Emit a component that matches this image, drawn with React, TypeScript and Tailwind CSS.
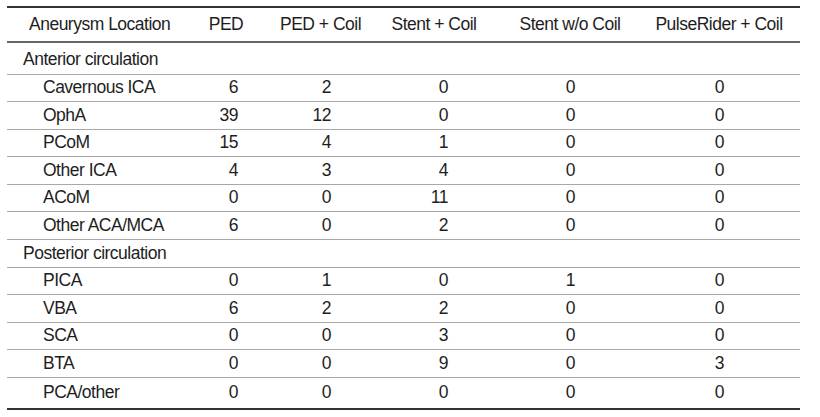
import React from "react";

type Row = { label: string; values?: number[]; group?: boolean };

const rows: Row[] = [
    { label: "Anterior circulation", group: true },
    { label: "Cavernous ICA", values: [6, 2, 0, 0, 0] },
    { label: "OphA", values: [39, 12, 0, 0, 0] },
    { label: "PCoM", values: [15, 4, 1, 0, 0] },
    { label: "Other ICA", values: [4, 3, 4, 0, 0] },
    { label: "ACoM", values: [0, 0, 11, 0, 0] },
    { label: "Other ACA/MCA", values: [6, 0, 2, 0, 0] },
    { label: "Posterior circulation", group: true },
    { label: "PICA", values: [0, 1, 0, 1, 0] },
    { label: "VBA", values: [6, 2, 2, 0, 0] },
    { label: "SCA", values: [0, 0, 3, 0, 0] },
    { label: "BTA", values: [0, 0, 9, 0, 3] },
    { label: "PCA/other", values: [0, 0, 0, 0, 0] },
];

// right padding of the number cells, per column
const numPad = ["pr-[42px]", "pr-[43px]", "pr-[64px]", "pr-[53px]", "pr-[76px]"];

const App: React.FC = () => {
    return (
        <div
            className="w-[820px] h-[417px] bg-white text-[#1e1e1e] pt-[6px] px-[7px] text-[17.5px] tracking-[-0.5px] leading-none whitespace-nowrap"
            style={{ fontFamily: '"Liberation Sans", Arial, sans-serif' }}
        >
            <div className="w-[793px] border-t-2 border-[#333]">
                {/* header */}
                <div className="grid grid-cols-[179px_94px_94px_138px_116px_172px] h-[35px] items-center border-b-2 border-[#666]">
                    <div className="pl-[22px]">Aneurysm Location</div>
                    <div className="text-center pr-[14px]">PED</div>
                    <div className="text-center pr-[20px]">PED + Coil</div>
                    <div className="text-center pr-[18px]">Stent + Coil</div>
                    <div className="text-center">Stent w/o Coil</div>
                    <div className="text-center pl-[10px]">PulseRider + Coil</div>
                </div>

                {rows.map((row, i) => {
                    const last = i === rows.length - 1;
                    const height = i === 0 ? "h-[31.5px] pt-[3px]" : last ? "h-[32px]" : "h-[27.6px]";
                    const border = last ? "border-b-2 border-[#333]" : "border-b border-[#a8a8a8]";
                    return (
                        <div
                            key={row.label}
                            className={`grid grid-cols-[179px_94px_94px_138px_116px_172px] items-center ${height} ${border}`}
                        >
                            <div className={row.group ? "pl-[16px]" : "pl-[36px]"}>{row.label}</div>
                            {row.values?.map((v, j) => (
                                <div key={j} className={`text-right ${numPad[j]}`}>
                                    {v}
                                </div>
                            ))}
                        </div>
                    );
                })}
            </div>
        </div>
    );
};

export default App;
